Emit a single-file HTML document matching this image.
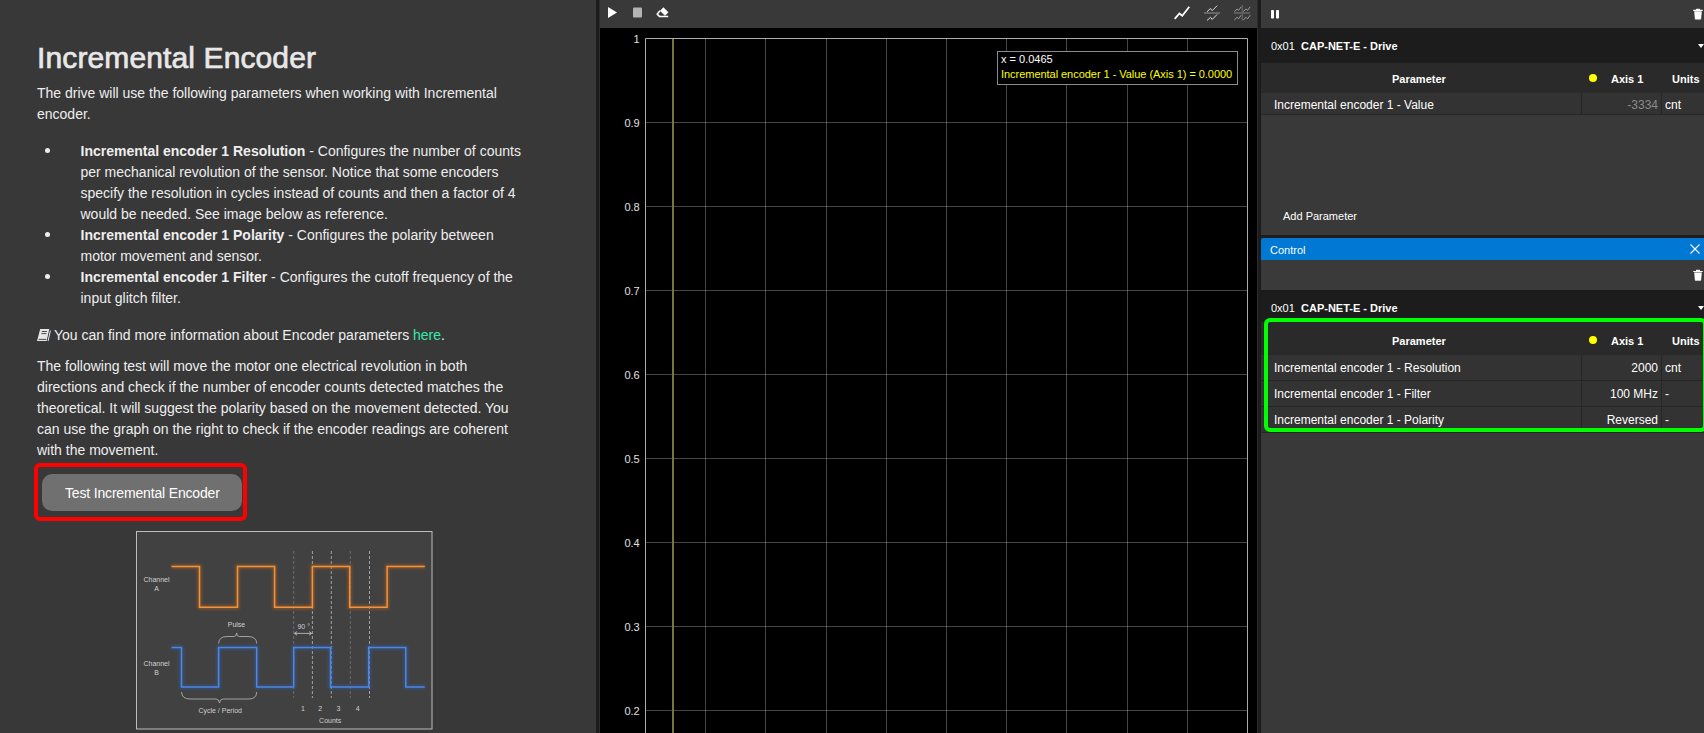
<!DOCTYPE html>
<html><head><meta charset="utf-8">
<style>
*{margin:0;padding:0;box-sizing:border-box}
html,body{width:1704px;height:733px;overflow:hidden;background:#252525;font-family:"Liberation Sans",sans-serif}
.a{position:absolute;white-space:nowrap}
#left{position:absolute;left:0;top:0;width:596px;height:733px;background:#383838;color:#eeeeee}
#sep1{position:absolute;left:596px;top:0;width:4px;height:733px;background:#1c1c1c;border-right:1px solid #2d2d2d}
#chart{position:absolute;left:600px;top:0;width:657px;height:733px;background:#000}
#ctool{position:absolute;left:0;top:0;width:657px;height:28px;background:#393939}
#sep2{position:absolute;left:1257px;top:0;width:4px;height:733px;background:#1c1c1c;border-left:1px solid #2d2d2d}
#right{position:absolute;left:1261px;top:0;width:443px;height:733px;background:#393939;color:#fff}
.p14{font-size:14px;line-height:21px}
.r11{font-size:11px;line-height:13px;color:#fff}
.r11b{font-size:11px;line-height:13px;color:#fff;font-weight:bold}
.r12{font-size:12px;line-height:14px;color:#fff}
.tri{position:absolute;width:0;height:0;border-left:3.8px solid transparent;border-right:3.8px solid transparent;border-top:4px solid #fff}
.dot{position:absolute;width:8px;height:8px;border-radius:50%;background:#ffff00}
.bul{position:absolute;left:0;width:5px;height:5px;border-radius:50%;background:#eeeeee}
.book{position:absolute;left:0;top:5px;width:13px;height:12px}
</style></head><body>
<div id="left">
  <div class="a" style="left:37px;top:40px;font-size:30px;line-height:36px;color:#e8e8e8;-webkit-text-stroke:0.7px #e8e8e8;letter-spacing:0.12px">Incremental Encoder</div>
  <div class="a p14" style="left:37px;top:83px">The drive will use the following parameters when working with Incremental<br>encoder.</div>
  <div class="a p14" style="left:45px;top:141px">
    <span class="bul" style="top:7px"></span><span class="bul" style="top:91px"></span><span class="bul" style="top:133px"></span>
  </div>
  <div class="a p14" style="left:80.5px;top:141px"><b>Incremental encoder 1 Resolution</b> - Configures the number of counts<br>per mechanical revolution of the sensor. Notice that some encoders<br>specify the resolution in cycles instead of counts and then a factor of 4<br>would be needed. See image below as reference.<br><b>Incremental encoder 1 Polarity</b> - Configures the polarity between<br>motor movement and sensor.<br><b>Incremental encoder 1 Filter</b> - Configures the cutoff frequency of the<br>input glitch filter.</div>
  <div class="a p14" style="left:37px;top:325px"><svg class="a" style="left:-1px;top:-325px" width="20" height="350" viewBox="36 0 20 350"><path d="M40.2 329 H49.3 L46.6 341 H37 Z" fill="#e6e6e6"/><path d="M41.8 331.5 H46.9 M41.4 333.6 H46.5 M38.6 339.4 H46.2" stroke="#393939" stroke-width="0.9"/><path d="M50.4 330.6 L48.1 341" stroke="#e6e6e6" stroke-width="1"/></svg><span style="position:absolute;left:17px">You can find more information about Encoder parameters <span style="color:#36eaa8">here</span>.</span></div>
  <div class="a p14" style="left:37px;top:356px">The following test will move the motor one electrical revolution in both<br>directions and check if the number of encoder counts detected matches the<br>theoretical. It will suggest the polarity based on the movement detected. You<br>can use the graph on the right to check if the encoder readings are coherent<br>with the movement.</div>
  <div class="a" style="left:34px;top:463.3px;width:213px;height:58.2px;border:4.6px solid #ff0000;border-radius:6px"></div>
<svg class="a" style="left:136px;top:531px" width="297" height="199" viewBox="136 531 297 199">
    <defs><filter id="gl" x="-10%" y="-10%" width="120%" height="120%"><feGaussianBlur stdDeviation="1.6"/></filter></defs>
    <rect x="136.5" y="531.5" width="295.5" height="197.5" fill="#414141" stroke="#bdbdbd" stroke-width="1"/>
    <g stroke-dasharray="3 2" stroke-width="0.8">
      <line x1="293.7" y1="551" x2="293.7" y2="698" stroke="#777"/>
      <line x1="312.4" y1="551" x2="312.4" y2="698" stroke="#bbb"/>
      <line x1="331.3" y1="551" x2="331.3" y2="698" stroke="#bbb"/>
      <line x1="350.3" y1="551" x2="350.3" y2="698" stroke="#777"/>
      <line x1="369.5" y1="551" x2="369.5" y2="698" stroke="#bbb"/>
    </g>
    <path id="wa" d="M171.5 566.5 H199.5 V607.2 H237.5 V566.5 H274.6 V607.2 H312.4 V566.5 H349.7 V607.2 H387.1 V566.5 H424.8" fill="none" stroke="#b8641f" stroke-width="4" opacity="0.55" filter="url(#gl)"/>
    <path d="M171.5 566.5 H199.5 V607.2 H237.5 V566.5 H274.6 V607.2 H312.4 V566.5 H349.7 V607.2 H387.1 V566.5 H424.8" fill="none" stroke="#f3923b" stroke-width="1.5"/>
    <path d="M171.5 647.5 H181.5 V687 H218.6 V647.5 H256.7 V687 H293.7 V647.5 H330.5 V687 H368.7 V647.5 H405.8 V687 H424.8" fill="none" stroke="#2c5fb0" stroke-width="4" opacity="0.55" filter="url(#gl)"/>
    <path d="M171.5 647.5 H181.5 V687 H218.6 V647.5 H256.7 V687 H293.7 V647.5 H330.5 V687 H368.7 V647.5 H405.8 V687 H424.8" fill="none" stroke="#4f86e0" stroke-width="1.5"/>
    <g font-family="Liberation Sans" font-size="7" fill="#d0d0d0" text-anchor="middle">
      <text x="156.5" y="582">Channel</text><text x="156.5" y="591">A</text>
      <text x="156.5" y="666">Channel</text><text x="156.5" y="675">B</text>
      <text x="236.5" y="627">Pulse</text>
      <text x="303.7" y="628.5">90 °</text>
      <text x="220.2" y="712.5">Cycle / Period</text>
      <text x="302.9" y="711">1</text><text x="320.3" y="711">2</text><text x="338.4" y="711">3</text><text x="357.6" y="711">4</text>
      <text x="330.2" y="723">Counts</text>
    </g>
    <path d="M218.6 643.5 Q219 636.5 227 636.5 H234 Q236.5 636.5 236.6 633 Q236.7 636.5 239.2 636.5 H248 Q256.5 636.5 256.7 643.5" fill="none" stroke="#bbb" stroke-width="0.8"/>
    <path d="M181.5 692 Q182 699 190 699 H216 Q219 699 219.5 703 Q220 699 223 699 H249 Q256.5 699 256.7 692" fill="none" stroke="#bbb" stroke-width="0.8"/>
    <path d="M294.5 633.4 H311.6 M297 631.6 L294.5 633.4 L297 635.2 M309.1 631.6 L311.6 633.4 L309.1 635.2" fill="none" stroke="#ccc" stroke-width="0.8"/>
  </svg>
  <div class="a" style="left:42px;top:474px;width:200px;height:37px;background:#707070;border-radius:10px;color:#fff;font-size:14px;line-height:38.6px;padding-left:23px;letter-spacing:-0.17px">Test Incremental Encoder</div>
</div>
<div id="sep1"></div>
<div id="chart">
  <div id="ctool">
    <svg class="a" style="left:0;top:0" width="80" height="28">
      <path d="M8 7 L17 12.5 L8 18 Z" fill="#ffffff"/>
      <rect x="33" y="7.5" width="9" height="10" rx="1" fill="#b4b4b4"/>
      <path d="M63.4 7.6 L68.2 12.3 L65 15.6 L60.2 10.8 Z" fill="#fff" stroke="#fff" stroke-width="0.4" stroke-linejoin="round"/>
      <path d="M60 10.7 L57.2 14.1 L59.7 16.6 H68.2" fill="none" stroke="#fff" stroke-width="1.5" stroke-linejoin="round"/>
    </svg>
    <svg class="a" style="left:570px;top:0" width="87" height="28">
      <path d="M4.7 18.8 L9.4 13.5 L12.3 15.8 L19.3 6.7" fill="none" stroke="#fff" stroke-width="1.8"/>
      <rect x="34" y="12" width="16" height="2" fill="#666"/>
      <path d="M37 11.7 L40.5 8.5 L42.2 10.6 L47.2 5.6" fill="none" stroke="#ddd" stroke-width="1"/>
      <path d="M37 20.5 L40.5 17.3 L42.2 19.4 L47.2 14.4" fill="none" stroke="#ddd" stroke-width="1"/>
      <rect x="64" y="12" width="16" height="2" fill="#5c5c5c"/>
      <rect x="71.5" y="5" width="1.6" height="15.5" fill="#5c5c5c"/>
      <path d="M64.3 11.6 L67 9 L68.6 10.3 L71.2 6.8 M73.2 11.6 L76 9 L77.6 10.3 L80.2 6.8 M64.3 20 L67 17.4 L68.6 18.7 L71.2 15.2 M73.2 20 L76 17.4 L77.6 18.7 L80.2 15.2" fill="none" stroke="#a6a6a6" stroke-width="0.9"/>
    </svg>
  </div>
  <svg class="a" style="left:0;top:28px" width="657" height="705" viewBox="0 28 657 705">
<line x1="105.5" y1="38" x2="105.5" y2="733" stroke="rgba(255,255,255,0.27)" stroke-width="1"/>
<line x1="165.5" y1="38" x2="165.5" y2="733" stroke="rgba(255,255,255,0.27)" stroke-width="1"/>
<line x1="226.5" y1="38" x2="226.5" y2="733" stroke="rgba(255,255,255,0.27)" stroke-width="1"/>
<line x1="286.5" y1="38" x2="286.5" y2="733" stroke="rgba(255,255,255,0.27)" stroke-width="1"/>
<line x1="346.5" y1="38" x2="346.5" y2="733" stroke="rgba(255,255,255,0.27)" stroke-width="1"/>
<line x1="406.5" y1="38" x2="406.5" y2="733" stroke="rgba(255,255,255,0.27)" stroke-width="1"/>
<line x1="466.5" y1="38" x2="466.5" y2="733" stroke="rgba(255,255,255,0.27)" stroke-width="1"/>
<line x1="527.5" y1="38" x2="527.5" y2="733" stroke="rgba(255,255,255,0.27)" stroke-width="1"/>
<line x1="587.5" y1="38" x2="587.5" y2="733" stroke="rgba(255,255,255,0.27)" stroke-width="1"/>
<line x1="45" y1="122.5" x2="647" y2="122.5" stroke="rgba(255,255,255,0.27)" stroke-width="1"/>
<line x1="45" y1="206.5" x2="647" y2="206.5" stroke="rgba(255,255,255,0.27)" stroke-width="1"/>
<line x1="45" y1="290.5" x2="647" y2="290.5" stroke="rgba(255,255,255,0.27)" stroke-width="1"/>
<line x1="45" y1="374.5" x2="647" y2="374.5" stroke="rgba(255,255,255,0.27)" stroke-width="1"/>
<line x1="45" y1="458.5" x2="647" y2="458.5" stroke="rgba(255,255,255,0.27)" stroke-width="1"/>
<line x1="45" y1="542.5" x2="647" y2="542.5" stroke="rgba(255,255,255,0.27)" stroke-width="1"/>
<line x1="45" y1="626.5" x2="647" y2="626.5" stroke="rgba(255,255,255,0.27)" stroke-width="1"/>
<line x1="45" y1="710.5" x2="647" y2="710.5" stroke="rgba(255,255,255,0.27)" stroke-width="1"/>
<rect x="72" y="38" width="2" height="695" fill="#76763c"/>
<path d="M45.5 733 V38.5 H647.5 V733" fill="none" stroke="#ababab" stroke-width="1"/>
<text x="39.7" y="42.5" text-anchor="end" font-size="11" fill="#e0e0e0" font-family="Liberation Sans">1</text>
<text x="39.7" y="126.5" text-anchor="end" font-size="11" fill="#e0e0e0" font-family="Liberation Sans">0.9</text>
<text x="39.7" y="210.5" text-anchor="end" font-size="11" fill="#e0e0e0" font-family="Liberation Sans">0.8</text>
<text x="39.7" y="294.5" text-anchor="end" font-size="11" fill="#e0e0e0" font-family="Liberation Sans">0.7</text>
<text x="39.7" y="378.5" text-anchor="end" font-size="11" fill="#e0e0e0" font-family="Liberation Sans">0.6</text>
<text x="39.7" y="462.5" text-anchor="end" font-size="11" fill="#e0e0e0" font-family="Liberation Sans">0.5</text>
<text x="39.7" y="546.5" text-anchor="end" font-size="11" fill="#e0e0e0" font-family="Liberation Sans">0.4</text>
<text x="39.7" y="630.5" text-anchor="end" font-size="11" fill="#e0e0e0" font-family="Liberation Sans">0.3</text>
<text x="39.7" y="714.5" text-anchor="end" font-size="11" fill="#e0e0e0" font-family="Liberation Sans">0.2</text>
</svg>
  <div class="a" style="left:397px;top:51px;width:241px;height:34px;border:1px solid #8c8c8c;background:#000;font-size:11px;line-height:15px;padding:0 0 0 3px">
    <div style="color:#fff">x = 0.0465</div>
    <div style="color:#ffff00;letter-spacing:-0.04px">Incremental encoder 1 - Value (Axis 1) = 0.0000</div>
  </div>
</div>
<div id="sep2"></div>
<div id="right">
  <div class="a" style="left:0;top:0;width:443px;height:28px;background:#3a3a3a"></div>
  <svg class="a" style="left:0;top:0" width="443" height="28">
    <rect x="10" y="10" width="3" height="8.5" rx="0.8" fill="#fff"/><rect x="15" y="10" width="3" height="8.5" rx="0.8" fill="#fff"/>
    <path d="M432.7 10.4 H441.3 M435.5 9.3 H438.5" stroke="#fff" stroke-width="1.2" stroke-linecap="round"/><path d="M433.5 11.6 H440.5 L439.8 19.2 H434.2 Z" fill="#fff" stroke="#fff" stroke-width="0.5" stroke-linejoin="round"/>
  </svg>
  <div class="a" style="left:0;top:28px;width:443px;height:35px;background:#1c1c1c"></div>
  <div class="a r11" style="left:10px;top:39.6px">0x01</div>
  <div class="a r11b" style="left:40px;top:39.6px">CAP-NET-E - Drive</div>
  <div class="tri" style="left:436.8px;top:44.3px"></div>
  <div class="a" style="left:0;top:63px;width:443px;height:30px;background:#2a2a2a"></div>
  <div class="a r11b" style="left:131px;top:72.6px">Parameter</div>
  <div class="dot" style="left:328px;top:74px"></div>
  <div class="a r11b" style="left:350px;top:72.6px">Axis 1</div>
  <div class="a r11b" style="left:411px;top:72.6px">Units</div>
  <div class="a" style="left:0;top:93px;width:443px;height:22px;background:#333;border-bottom:1px solid #262626"></div>
  <div class="a" style="left:320px;top:93px;width:1px;height:22px;background:#262626"></div>
  <div class="a" style="left:400px;top:93px;width:1px;height:22px;background:#262626"></div>
  <div class="a r12" style="left:13px;top:97.6px">Incremental encoder 1 - Value</div>
  <div class="a r12" style="left:300px;top:97.6px;width:97px;text-align:right;color:#8a8a8a">-3334</div>
  <div class="a r12" style="left:404px;top:97.6px">cnt</div>
  <div class="a r11" style="left:22px;top:210.1px">Add Parameter</div>
  <div class="a" style="left:0;top:235px;width:443px;height:3px;background:#1e1e1e"></div>
  <div class="a" style="left:0;top:238px;width:443px;height:22px;background:#0078d4;border-radius:3px 0 0 0"></div>
  <div class="a r11" style="left:9px;top:243.9px">Control</div>
  <svg class="a" style="left:428px;top:243px" width="12" height="12"><path d="M1.5 1.5 L10.5 10.5 M10.5 1.5 L1.5 10.5" stroke="#fff" stroke-width="1.1"/></svg>
  <div class="a" style="left:0;top:260px;width:443px;height:30px;background:#3a3a3a"></div>
  <svg class="a" style="left:428px;top:268px" width="15" height="16"><path d="M4.7 3.5 H13.3 M7.5 2.4 H10.5" stroke="#fff" stroke-width="1.2" stroke-linecap="round"/><path d="M5.5 4.7 H12.5 L11.8 12.4 H6.2 Z" fill="#fff" stroke="#fff" stroke-width="0.5" stroke-linejoin="round"/></svg>
  <div class="a" style="left:0;top:290px;width:443px;height:32px;background:#1c1c1c"></div>
  <div class="a r11" style="left:10px;top:301.5px">0x01</div>
  <div class="a r11b" style="left:40px;top:301.5px">CAP-NET-E - Drive</div>
  <div class="tri" style="left:437px;top:306.2px"></div>
  <div class="a" style="left:0;top:322px;width:443px;height:33px;background:#2a2a2a"></div>
  <div class="a r11b" style="left:131px;top:335px">Parameter</div>
  <div class="dot" style="left:328px;top:336px"></div>
  <div class="a r11b" style="left:350px;top:335px">Axis 1</div>
  <div class="a r11b" style="left:411px;top:335px">Units</div>
  <div class="a" style="left:0;top:355px;width:443px;height:26px;background:#333;border-bottom:1px solid #262626"></div>
  <div class="a" style="left:320px;top:355px;width:1px;height:26px;background:#262626"></div>
  <div class="a" style="left:400px;top:355px;width:1px;height:26px;background:#262626"></div>
  <div class="a r12" style="left:13px;top:361px">Incremental encoder 1 - Resolution</div>
  <div class="a r12" style="left:300px;top:361px;width:97px;text-align:right">2000</div>
  <div class="a r12" style="left:404px;top:361px">cnt</div>
  <div class="a" style="left:0;top:381px;width:443px;height:26px;background:#333;border-bottom:1px solid #262626"></div>
  <div class="a" style="left:320px;top:381px;width:1px;height:26px;background:#262626"></div>
  <div class="a" style="left:400px;top:381px;width:1px;height:26px;background:#262626"></div>
  <div class="a r12" style="left:13px;top:387px">Incremental encoder 1 - Filter</div>
  <div class="a r12" style="left:300px;top:387px;width:97px;text-align:right">100 MHz</div>
  <div class="a r12" style="left:404px;top:387px">-</div>
  <div class="a" style="left:0;top:407px;width:443px;height:26px;background:#333;border-bottom:1px solid #262626"></div>
  <div class="a" style="left:320px;top:407px;width:1px;height:26px;background:#262626"></div>
  <div class="a" style="left:400px;top:407px;width:1px;height:26px;background:#262626"></div>
  <div class="a r12" style="left:13px;top:413px">Incremental encoder 1 - Polarity</div>
  <div class="a r12" style="left:300px;top:413px;width:97px;text-align:right">Reversed</div>
  <div class="a r12" style="left:404px;top:413px">-</div>
  
  <div class="a" style="left:3px;top:318px;width:443px;height:114px;border:4px solid #00ff00;border-radius:6px"></div>
</div>
</body></html>
